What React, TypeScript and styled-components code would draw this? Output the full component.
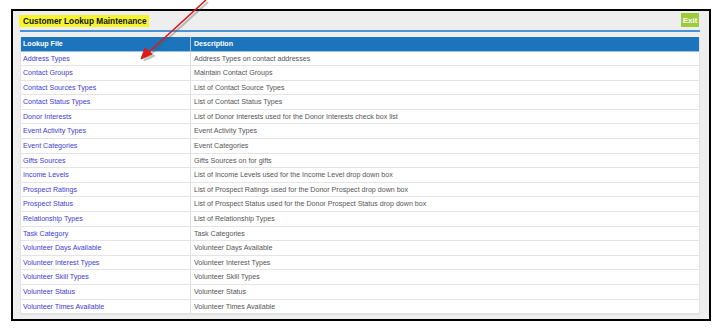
import React from "react";
import styled, { createGlobalStyle } from "styled-components";

const Global = createGlobalStyle`
  html, body { margin: 0; padding: 0; background: #ffffff; }
  body { font-family: "Liberation Sans", Arial, sans-serif; }
`;

const Page = styled.div`
  position: relative;
  width: 723px;
  height: 331px;
  padding: 9px 0 0 11px;
  box-sizing: border-box;
`;

const Frame = styled.div`
  width: 700px;
  height: 312px;
  box-sizing: border-box;
  border: 2px solid #000;
  background: #eeeeee;
  padding: 0 9px 0 7px;
  display: flex;
  flex-direction: column;
`;

const TopBar = styled.div`
  display: flex;
  justify-content: space-between;
  align-items: flex-start;
  height: 18px;
`;

const Title = styled.span`
  background: #f5f52a;
  color: #111;
  font-weight: bold;
  font-size: 8.3px;
  line-height: 12px;
  padding: 0 2px 0 4px;
  margin-top: 4px;
  margin-left: -1px;
`;

const ExitButton = styled.button`
  border: none;
  background: #9ccc3a;
  color: #ffffff;
  font-family: "Liberation Sans", Arial, sans-serif;
  font-weight: bold;
  font-size: 8px;
  width: 18px;
  height: 14px;
  padding: 0;
  margin-top: 2px;
  margin-right: 1px;
`;

const Rule = styled.div`
  height: 2px;
  background: #4a94d4;
  margin: 1px 0 0 0;
`;

const Table = styled.div`
  margin: 5px 0 0 0;
  width: 680px;
  background: #ffffff;
  border: 1px solid #e2e2e2;
  border-top: none;
  box-sizing: border-box;
`;

const Row = styled.div<{ $head?: boolean }>`
  display: grid;
  grid-template-columns: 170px 1fr;
  height: ${(p) => (p.$head ? "14.5px" : "14.6px")};
  background: ${(p) => (p.$head ? "#1b74bc" : "#ffffff")};
  border-bottom: 1px solid ${(p) => (p.$head ? "#9cc3e4" : "#e4e4e4")};
  box-sizing: border-box;
`;

const Cell = styled.div<{ $head?: boolean; $link?: boolean; $first?: boolean }>`
  font-size: 7.1px;
  line-height: 14px;
  padding-left: ${(p) => (p.$first ? "2px" : "3px")};
  white-space: nowrap;
  overflow: hidden;
  color: ${(p) => (p.$head ? "#ffffff" : p.$link ? "#3c3cd6" : "#555555")};
  font-weight: ${(p) => (p.$head ? "bold" : "normal")};
  border-right: ${(p) => (p.$first ? `1px solid ${p.$head ? "#9cc3e4" : "#dcdcdc"}` : "none")};
`;

const ArrowSvg = styled.svg`
  position: absolute;
  left: 0;
  top: 0;
  pointer-events: none;
`;

const rows: [string, string][] = [
  ["Address Types", "Address Types on contact addresses"],
  ["Contact Groups", "Maintain Contact Groups"],
  ["Contact Sources Types", "List of Contact Source Types"],
  ["Contact Status Types", "List of Contact Status Types"],
  ["Donor Interests", "List of Donor Interests used for the Donor Interests check box list"],
  ["Event Activity Types", "Event Activity Types"],
  ["Event Categories", "Event Categories"],
  ["Gifts Sources", "Gifts Sources on for gifts"],
  ["Income Levels", "List of Income Levels used for the Income Level drop down box"],
  ["Prospect Ratings", "List of Prospect Ratings used for the Donor Prospect drop down box"],
  ["Prospect Status", "List of Prospect Status used for the Donor Prospect Status drop down box"],
  ["Relationship Types", "List of Relationship Types"],
  ["Task Category", "Task Categories"],
  ["Volunteer Days Available", "Volunteer Days Available"],
  ["Volunteer Interest Types", "Volunteer Interest Types"],
  ["Volunteer Skill Types", "Volunteer Skill Types"],
  ["Volunteer Status", "Volunteer Status"],
  ["Volunteer Times Available", "Volunteer Times Available"],
];

export default function App() {
  return (
    <Page>
      <Global />
      <Frame>
        <TopBar>
          <Title>Customer Lookup Maintenance</Title>
          <ExitButton>Exit</ExitButton>
        </TopBar>
        <Rule />
        <Table>
          <Row $head>
            <Cell $head $first>Lookup File</Cell>
            <Cell $head>Description</Cell>
          </Row>
          {rows.map(([a, b]) => (
            <Row key={a}>
              <Cell $link $first>{a}</Cell>
              <Cell>{b}</Cell>
            </Row>
          ))}
        </Table>
      </Frame>
      <ArrowSvg width="723" height="331" viewBox="0 0 723 331">
        <g opacity="0.35" stroke="#555" fill="#555">
          <line x1="208" y1="2" x2="150" y2="55" strokeWidth="2" />
          <polygon points="144,61 148,50 155,56" />
        </g>
        <g stroke="#e01818" fill="#e01818">
          <line x1="206" y1="0" x2="148" y2="53" strokeWidth="1.6" />
          <polygon points="141,59 145,48 152,54" />
        </g>
      </ArrowSvg>
    </Page>
  );
}
